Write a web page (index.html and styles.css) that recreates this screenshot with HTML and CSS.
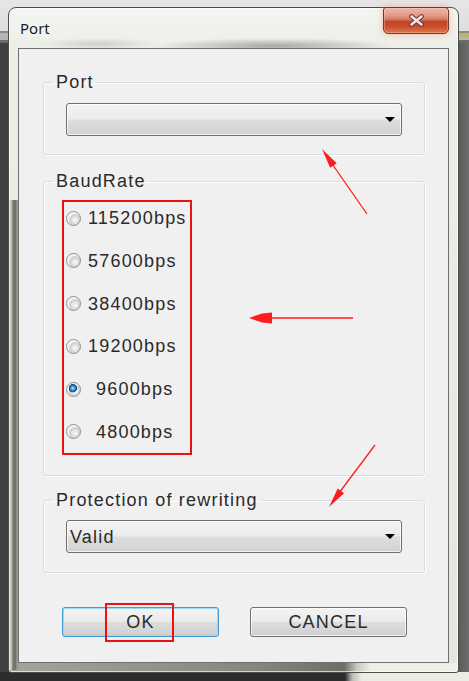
FILE: index.html
```html
<!DOCTYPE html>
<html lang="en">
<head>
<meta charset="utf-8">
<title>Port</title>
<link rel="stylesheet" href="styles.css">
</head>
<body>
<div class="desktop">
  <div class="window">
    <div class="titlebar">
      <span class="title">Port</span>
      <button class="close" aria-label="Close">
        <svg width="17" height="13" viewBox="0 0 17 13">
          <path d="M3.5 2.5 L13.5 10.5 M13.5 2.5 L3.5 10.5" stroke="#6e3434" stroke-width="4.6" stroke-linecap="round" fill="none"/>
          <path d="M3.5 2.5 L13.5 10.5 M13.5 2.5 L3.5 10.5" stroke="#efe4e4" stroke-width="2.6" stroke-linecap="round" fill="none"/>
        </svg>
      </button>
    </div>

    <div class="client">
      <fieldset class="group group-port">
        <legend>Port</legend>
        <div class="group-body">
          <div class="combo">
            <span class="combo-value"></span>
            <span class="combo-arrow"></span>
          </div>
        </div>
      </fieldset>

      <fieldset class="group group-baud">
        <legend>BaudRate</legend>
        <div class="group-body">
          <div class="baud-list">
            <div class="radio"><span class="radio-dot"></span><span class="radio-text">115200bps</span></div>
            <div class="radio"><span class="radio-dot"></span><span class="radio-text">57600bps</span></div>
            <div class="radio"><span class="radio-dot"></span><span class="radio-text">38400bps</span></div>
            <div class="radio"><span class="radio-dot"></span><span class="radio-text">19200bps</span></div>
            <div class="radio"><span class="radio-dot is-checked"></span><span class="radio-text is-indented">9600bps</span></div>
            <div class="radio"><span class="radio-dot"></span><span class="radio-text is-indented">4800bps</span></div>
          </div>
        </div>
      </fieldset>

      <fieldset class="group group-protect">
        <legend>Protection of rewriting</legend>
        <div class="group-body">
          <div class="combo">
            <span class="combo-value">Valid</span>
            <span class="combo-arrow"></span>
          </div>
        </div>
      </fieldset>

      <div class="buttons">
        <button class="btn btn-default">OK<span class="mark"></span></button>
        <button class="btn">CANCEL</button>
      </div>
    </div>
  </div>

  <svg class="arrows" width="469" height="681" viewBox="0 0 469 681">
    <g stroke="#ff1c1c" stroke-width="1.3" fill="none">
      <line x1="367" y1="214" x2="328" y2="158"/>
      <line x1="353" y1="318" x2="266" y2="318"/>
      <line x1="375" y1="445" x2="336" y2="497"/>
    </g>
    <g fill="#ff1c1c">
      <polygon points="322,149 336.7,163.2 330.1,167.8"/>
      <polygon points="249,318 262,313.5 272,312.5 272,323.5 262,322.5"/>
      <polygon points="329,507 337.7,488.5 344.1,493.3"/>
    </g>
  </svg>
</div>
</body>
</html>
```

FILE: styles.css
```css
html, body {
  margin: 0;
  padding: 0;
}

body {
  font-family: "Liberation Sans", Arial, sans-serif;
  color: #2a2a2a;
}

/* Backdrop around the dialog */
.desktop {
  position: relative;
  width: 469px;
  height: 681px;
  overflow: hidden;
  box-sizing: border-box;
  padding: 7px 0 0 8px;
  background:
    linear-gradient(90deg, #2c2c2c 0 345px, #b9bbb3 352px, #eceee6 362px) 0 100% / 100% 9px no-repeat,
    linear-gradient(#bdb46a, #bdb46a) 458px 33px / 11px 4px no-repeat,
    linear-gradient(180deg, #e6e6e6 0, #dedede 31px, #8c8c8c 31px 33px, #b6b6b6 33px 40px, #6a6a6a 40px 43px, transparent 43px) 0 0 / 100% 43px no-repeat,
    linear-gradient(90deg, #404040 0 458px, #5a5a5a 458px, #6e6e6e 469px);
}

/* Glass window frame */
.window {
  width: 451px;
  height: 666px;
  box-sizing: border-box;
  display: flex;
  flex-direction: column;
  padding: 0 9px 9px 9px;
  border: 1px solid #4b4d48;
  border-radius: 8px 8px 3px 3px;
  box-shadow: inset 0 0 0 1px rgba(255, 255, 255, 0.65);
  background:
    radial-gradient(ellipse 120px 8px at 265px 38px, rgba(110, 114, 100, 0.55), rgba(110, 114, 100, 0) 100%),
    radial-gradient(ellipse 60px 6px at 90px 36px, rgba(150, 152, 140, 0.35), rgba(150, 152, 140, 0) 100%),
    linear-gradient(90deg, #b9bdb1 0, #cfd3c7 2px, #767c6c 4px, #6f7565 7px, #a6ab9c 8px, #8a8f80 9px) 0 192px / 9px 470px no-repeat,
    linear-gradient(90deg, #a3a59a 0, #85877d 250px, #6d6f67 335px, #c9cbc2 348px, #eef0e8 362px) 0 100% / 100% 9px no-repeat,
    linear-gradient(180deg, #f4f6f2 0, #eceee8 40px, #e3e6de 100%);
}

.titlebar {
  height: 40px;
  display: flex;
  justify-content: space-between;
  align-items: flex-start;
  flex: none;
}

.title {
  font-family: "Noto Sans", "Open Sans", sans-serif;
  font-size: 15px;
  line-height: 20px;
  padding: 10px 0 0 2px;
  color: #1b1b1b;
  text-shadow: 0 0 6px rgba(255, 255, 255, 0.9);
}

.close {
  width: 66px;
  height: 27px;
  margin-top: -1px;
  padding: 0;
  display: flex;
  align-items: center;
  justify-content: center;
  border: 1px solid #6b3b33;
  border-radius: 3px 4px 5px 5px;
  background: linear-gradient(180deg, #eeb6a6 0, #e29a86 30%, #d4735a 48%, #c6452a 52%, #c94a2c 72%, #e07a48 100%);
  box-shadow: 0 0 6px rgba(255, 120, 90, 0.55), inset 0 0 0 1px rgba(255, 220, 200, 0.35);
}

/* Dialog body */
.client {
  height: 615px;
  box-sizing: border-box;
  border: 1px solid #6f6f6f;
  background: #f0f0f0;
  display: flex;
  flex-direction: column;
  align-items: flex-start;
  font-size: 18px;
  letter-spacing: 1.2px;
}

.group {
  width: 382px;
  box-sizing: border-box;
  margin: 0 0 0 24px;
  padding: 0;
  border: 1px solid #d5dfe5;
  border-radius: 3px;
  box-shadow: inset 1px 1px 0 #fbfcfd, 1px 1px 0 #fbfcfd;
  min-inline-size: 0;
}

.group legend {
  margin-left: 9px;
  padding: 0 3px;
  line-height: 20px;
  font-size: 18px;
  color: #2a2a2a;
}

.group-port { margin-top: 23px; }
.group-baud { margin-top: 16px; }
.group-protect { margin-top: 14px; }

.group-port .group-body { padding: 11px 22px 18px; }
.group-baud .group-body { padding: 9px 18px 20px; }
.group-protect .group-body { padding: 10px 22px 19px; }

/* Drop-down boxes */
.combo {
  height: 33px;
  box-sizing: border-box;
  display: flex;
  align-items: center;
  justify-content: space-between;
  border: 1px solid #707070;
  border-radius: 3px;
  background: linear-gradient(180deg, #f3f3f3 0, #ececec 48%, #dedede 52%, #d2d2d2 100%);
  box-shadow: inset 0 0 0 1px rgba(255, 255, 255, 0.7);
  padding: 0 6px 0 3px;
}

.combo-value {
  line-height: 20px;
}

.combo-arrow {
  width: 0;
  height: 0;
  border-left: 5px solid transparent;
  border-right: 5px solid transparent;
  border-top: 5px solid #000;
}

/* Baud rate radio list, framed in red */
.baud-list {
  width: 130px;
  height: 255px;
  box-sizing: border-box;
  border: 2px solid #ee1111;
  padding: 3px 0 0 2px;
  display: grid;
  grid-auto-rows: 26px;
  row-gap: 16.8px;
}

.radio {
  display: flex;
  align-items: center;
  gap: 7px;
}

.radio-dot {
  width: 15px;
  height: 15px;
  box-sizing: border-box;
  flex: none;
  border-radius: 50%;
  border: 1px solid #8e8f8f;
  background: radial-gradient(circle at 62% 62%, #fbfbfb 0, #e8e8e8 2.5px, #cfcfcf 4.8px, #d9d9d9 5.8px, #f4f4f4 6.4px);
}

.radio-dot.is-checked {
  background:
    radial-gradient(circle at 45% 40%, #c4ecff 0, #49a8ea 1.6px, #11609f 3.4px, #0a4c86 3.9px, rgba(10, 76, 134, 0) 4.4px),
    radial-gradient(circle at 62% 62%, #fbfbfb 0, #e8e8e8 2.5px, #cfcfcf 4.8px, #d9d9d9 5.8px, #f4f4f4 6.4px);
}

.radio-text {
  line-height: 20px;
}

.radio-text.is-indented {
  padding-left: 8px;
}

/* OK / CANCEL */
.buttons {
  margin: 34px 0 0 43px;
  display: flex;
  gap: 31px;
}

.btn {
  position: relative;
  width: 157px;
  height: 30px;
  padding: 0;
  font-family: inherit;
  font-size: 18px;
  letter-spacing: 1.2px;
  color: #2a2a2a;
  border: 1px solid #707070;
  border-radius: 3px;
  background: linear-gradient(180deg, #f3f3f3 0, #ebebeb 48%, #dddddd 52%, #cfcfcf 100%);
  box-shadow: inset 0 0 0 1px rgba(255, 255, 255, 0.7);
}

.btn-default {
  border-color: #3c9ddb;
  box-shadow: inset 0 0 0 1px #9cd8f4;
}

.mark {
  position: absolute;
  left: 42px;
  top: -5px;
  width: 69px;
  height: 39px;
  box-sizing: border-box;
  border: 2px solid #ee1111;
}

/* Red annotation arrows drawn over the dialog */
.arrows {
  position: absolute;
  left: 0;
  top: 0;
  pointer-events: none;
}
```
